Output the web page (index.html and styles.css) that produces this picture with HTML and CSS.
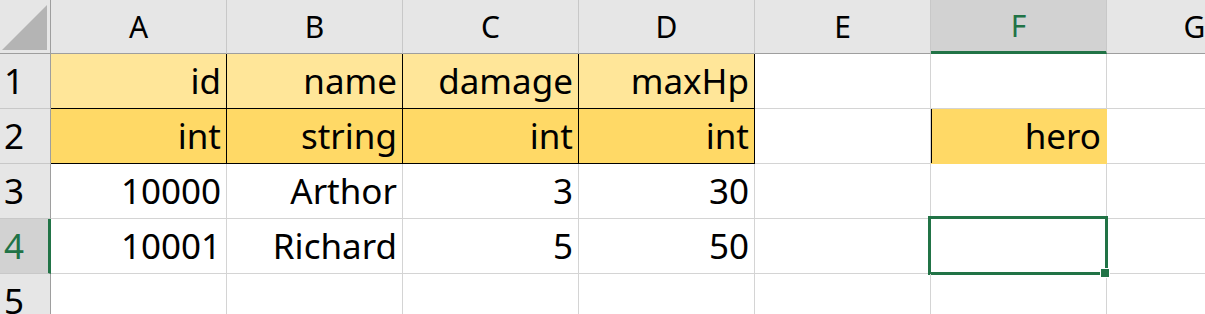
FILE: index.html
```html
<!DOCTYPE html>
<html lang="en">
<head>
  <meta charset="UTF-8">
  <title>hero.xlsx</title>
  <link rel="stylesheet" href="styles.css">
</head>
<body>

<div class="sheet">
  <!-- column headers -->
  <div class="corner"><span class="corner-mark"></span></div>
  <div class="col-head">A</div>
  <div class="col-head">B</div>
  <div class="col-head">C</div>
  <div class="col-head">D</div>
  <div class="col-head">E</div>
  <div class="col-head active">F</div>
  <div class="col-head">G</div>

  <!-- row 1: field names -->
  <div class="row-head">1</div>
  <div class="cell name-row">id</div>
  <div class="cell name-row">name</div>
  <div class="cell name-row">damage</div>
  <div class="cell name-row">maxHp</div>
  <div class="cell"></div>
  <div class="cell"></div>
  <div class="cell"></div>

  <!-- row 2: field types -->
  <div class="row-head">2</div>
  <div class="cell type-row">int</div>
  <div class="cell type-row">string</div>
  <div class="cell type-row">int</div>
  <div class="cell type-row">int</div>
  <div class="cell"></div>
  <div class="cell table-name">hero</div>
  <div class="cell"></div>

  <!-- data -->
  <div class="row-head">3</div>
  <div class="cell">10000</div>
  <div class="cell">Arthor</div>
  <div class="cell">3</div>
  <div class="cell">30</div>
  <div class="cell"></div>
  <div class="cell"></div>
  <div class="cell"></div>

  <div class="row-head active">4</div>
  <div class="cell">10001</div>
  <div class="cell">Richard</div>
  <div class="cell">5</div>
  <div class="cell">50</div>
  <div class="cell"></div>
  <div class="cell selected"><span class="fill-handle"></span></div>
  <div class="cell"></div>

  <div class="row-head">5</div>
  <div class="cell"></div>
  <div class="cell"></div>
  <div class="cell"></div>
  <div class="cell"></div>
  <div class="cell"></div>
  <div class="cell"></div>
  <div class="cell"></div>
</div>

</body>
</html>
```

FILE: styles.css
```css
body {
  margin: 0;
  overflow: hidden;
  background: #fff;
  font-family: "Noto Sans", "Open Sans", sans-serif;
  color: #000;
}

.sheet {
  display: grid;
  grid-template-columns: 51px repeat(7, 176px);
  grid-template-rows: 54px repeat(5, 55px);
}

/* headers */
.corner {
  position: relative;
  background: #e6e6e6;
  border-right: 1px solid #9e9e9e;
  border-bottom: 1px solid #9e9e9e;
}
.corner-mark {
  position: absolute;
  right: 3px;
  bottom: 3px;
  width: 0;
  height: 0;
  border-left: 45px solid transparent;
  border-bottom: 45px solid #b4b4b4;
}

.col-head {
  background: #e6e6e6;
  border-right: 1px solid #c8c8c8;
  border-bottom: 1px solid #9e9e9e;
  font-size: 30px;
  line-height: 53px;
  text-align: center;
}
.col-head.active {
  background: #d2d2d2;
  color: #217346;
  border-bottom: 3px solid #217346;
  line-height: 51px;
}

.row-head {
  background: #e6e6e6;
  border-right: 1px solid #9e9e9e;
  border-bottom: 1px solid #c8c8c8;
  font-size: 35px;
  line-height: 54px;
  padding-left: 4px;
}
.row-head.active {
  background: #d2d2d2;
  color: #217346;
  border-right: 3px solid #217346;
}

/* cells */
.cell {
  position: relative;
  border-right: 1px solid #d4d4d4;
  border-bottom: 1px solid #d4d4d4;
  font-size: 35px;
  line-height: 54px;
  text-align: right;
  padding-right: 5px;
  white-space: nowrap;
}

.name-row {
  background: #ffe699;
  border-color: #000;
}
.type-row {
  background: #ffd966;
  border-color: #000;
}
.table-name {
  background: #ffd966;
  box-shadow: inset 1px 0 0 #000;
  border-color: #ffd966;
}

/* active cell frame */
.selected::after {
  content: "";
  position: absolute;
  top: -3px;
  left: -3px;
  right: -2px;
  bottom: -2px;
  border: 3px solid #217346;
}
.fill-handle {
  position: absolute;
  right: -4px;
  bottom: -5px;
  width: 8px;
  height: 8px;
  background: #217346;
  border: 1px solid #fff;
  z-index: 1;
}
```
